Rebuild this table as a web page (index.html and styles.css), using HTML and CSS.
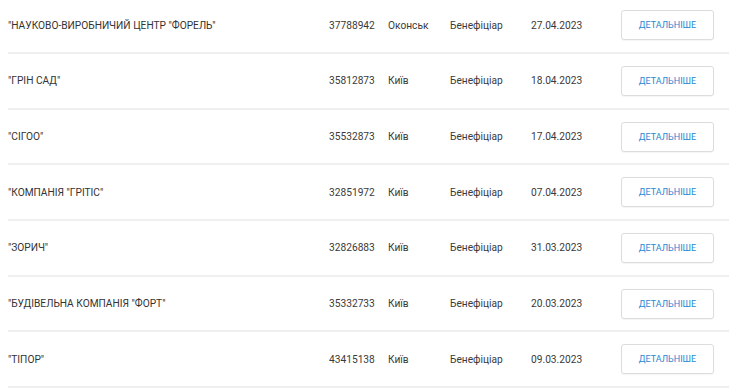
FILE: index.html
```html
<!DOCTYPE html>
<html lang="uk">
<head>
<meta charset="utf-8">
<link rel="stylesheet" href="styles.css">
</head>
<body>
<div class="list">
  <div class="row"><div class="name">"НАУКОВО-ВИРОБНИЧИЙ ЦЕНТР "ФОРЕЛЬ"</div><div class="code">37788942</div><div class="city">Оконськ</div><div class="role">Бенефіціар</div><div class="date">27.04.2023</div><div class="act"><button class="btn">Детальніше</button></div></div>
  <div class="row"><div class="name">"ГРІН САД"</div><div class="code">35812873</div><div class="city">Київ</div><div class="role">Бенефіціар</div><div class="date">18.04.2023</div><div class="act"><button class="btn">Детальніше</button></div></div>
  <div class="row"><div class="name">"СІГОО"</div><div class="code">35532873</div><div class="city">Київ</div><div class="role">Бенефіціар</div><div class="date">17.04.2023</div><div class="act"><button class="btn">Детальніше</button></div></div>
  <div class="row"><div class="name">"КОМПАНІЯ "ГРІТІС"</div><div class="code">32851972</div><div class="city">Київ</div><div class="role">Бенефіціар</div><div class="date">07.04.2023</div><div class="act"><button class="btn">Детальніше</button></div></div>
  <div class="row"><div class="name">"ЗОРИЧ"</div><div class="code">32826883</div><div class="city">Київ</div><div class="role">Бенефіціар</div><div class="date">31.03.2023</div><div class="act"><button class="btn">Детальніше</button></div></div>
  <div class="row"><div class="name">"БУДІВЕЛЬНА КОМПАНІЯ "ФОРТ"</div><div class="code">35332733</div><div class="city">Київ</div><div class="role">Бенефіціар</div><div class="date">20.03.2023</div><div class="act"><button class="btn">Детальніше</button></div></div>
  <div class="row"><div class="name">"ТІПОР"</div><div class="code">43415138</div><div class="city">Київ</div><div class="role">Бенефіціар</div><div class="date">09.03.2023</div><div class="act"><button class="btn">Детальніше</button></div></div>
</div>
</body>
</html>
```
FILE: styles.css
```css
html, body {
  margin: 0;
  padding: 0;
  background: #fff;
}
body {
  font-family: Roboto, "Noto Sans", sans-serif;
  font-size: 10.2px;
  color: #333;
  overflow: hidden;
}
.list {
  margin: -1.5px 0 0 8px;
  width: 721px;
}
.row {
  display: grid;
  grid-template-columns: 321px 59px 62px 81px 90px 1fr;
  align-items: center;
  height: 53.67px;
  border-bottom: 2px solid #efefef;
}
.name { color: #333; }
.code, .city, .role, .date { color: #3a3a3a; }
.btn {
  display: block;
  width: 93px;
  height: 30px;
  background: #fff;
  border: 1px solid #dcdcdc;
  border-radius: 3px;
  box-shadow: 0 1px 1px rgba(0,0,0,0.04);
  font-family: Roboto, "Noto Sans", sans-serif;
  font-size: 9px;
  text-transform: uppercase;
  color: #2a88d4;
  padding: 0;
  cursor: pointer;
}
```
